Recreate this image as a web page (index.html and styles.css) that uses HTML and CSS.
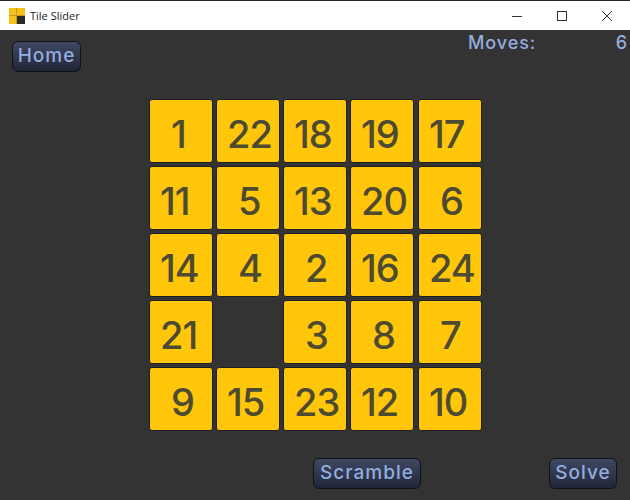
FILE: index.html
```html
<!DOCTYPE html>
<html lang="en">
<head>
    <title>Tile Slider</title>
    <link rel="stylesheet" href="styles.css">
</head>
<body>
    <div class="titlebar">
        <svg class="app-icon" width="16" height="16" viewBox="0 0 16 16">
            <rect x="0" y="0" width="16" height="16" fill="#f5c21b"/>
            <rect x="7" y="0" width="1" height="16" fill="#c99a1a"/>
            <rect x="0" y="7" width="16" height="1" fill="#c99a1a"/>
            <rect x="8" y="8" width="8" height="8" fill="#2b2b22"/>
        </svg>
        <span class="title">Tile Slider</span>
        <div class="window-buttons">
            <svg width="12" height="12" viewBox="0 0 12 12"><path d="M1 6.5H11" stroke="#333" fill="none"/></svg>
            <svg width="12" height="12" viewBox="0 0 12 12"><rect x="1.5" y="1.5" width="9" height="9" stroke="#333" fill="none"/></svg>
            <svg width="12" height="12" viewBox="0 0 12 12"><path d="M1 1L11 11M11 1L1 11" stroke="#333" fill="none"/></svg>
        </div>
    </div>

    <div class="game">
        <div class="top-row">
            <button class="btn">Home</button>
            <div class="moves">
                <span>Moves:</span>
                <span>6</span>
            </div>
        </div>

        <div class="board">
            <div class="tile single">1</div>
            <div class="tile">22</div>
            <div class="tile">18</div>
            <div class="tile">19</div>
            <div class="tile">17</div>
            <div class="tile">11</div>
            <div class="tile single">5</div>
            <div class="tile">13</div>
            <div class="tile">20</div>
            <div class="tile single">6</div>
            <div class="tile">14</div>
            <div class="tile single">4</div>
            <div class="tile single">2</div>
            <div class="tile">16</div>
            <div class="tile">24</div>
            <div class="tile">21</div>
            <div class="tile empty"></div>
            <div class="tile single">3</div>
            <div class="tile single">8</div>
            <div class="tile single">7</div>
            <div class="tile single">9</div>
            <div class="tile">15</div>
            <div class="tile">23</div>
            <div class="tile">12</div>
            <div class="tile">10</div>
        </div>

        <div class="bottom-row">
            <button class="btn scramble">Scramble</button>
            <button class="btn solve">Solve</button>
        </div>
    </div>
</body>
</html>
```

FILE: styles.css
```css
body {
    margin: 0;
    height: 500px;
    overflow: hidden;
    background-color: #333333;
    font-family: Inter, sans-serif;
}

.titlebar {
    height: 29px;
    display: flex;
    align-items: center;
    background: white;
    border-top: 1px solid #2a2a2a;
}
.app-icon {
    margin-left: 9px;
}
.title {
    margin-left: 5px;
    font-family: "Open Sans", sans-serif;
    font-size: 11px;
    color: #222;
}
.window-buttons {
    margin-left: auto;
    display: flex;
    gap: 33px;
    padding-right: 17px;
}

.game {
    display: flex;
    flex-direction: column;
    height: 470px;
}

.top-row {
    height: 69px;
    display: flex;
    justify-content: space-between;
    align-items: flex-start;
    padding-left: 12px;
}
.top-row .btn {
    margin-top: 11px;
    width: 69px;
}
.moves {
    width: 160px;
    display: flex;
    justify-content: space-between;
    padding-right: 2px;
    margin-top: 2px;
    font-size: 18px;
    font-weight: 500;
    letter-spacing: 0.9px;
    color: #93addf;
}

.btn {
    height: 31px;
    padding: 0 0 2px;
    border: 1px solid #111216;
    border-radius: 6px;
    background: linear-gradient(#3f4963, #212538);
    color: #93addf;
    font-family: Inter, sans-serif;
    font-size: 19px;
    font-weight: 500;
    letter-spacing: 1px;
}

.board {
    display: grid;
    grid-template-columns: repeat(3, 67px) 68px 64px;
    grid-auto-rows: 64px;
    row-gap: 3px;
    margin-left: 149px;
}
.tile {
    width: 64px;
    display: flex;
    align-items: center;
    padding-left: 10px;
    padding-top: 5px;
    box-sizing: border-box;
    background-color: #ffc60a;
    border: 1px solid #1f1f1f;
    border-radius: 3px;
    color: #4d4a32;
    font-size: 38px;
    font-weight: 500;
    letter-spacing: -1px;
}
.tile.single {
    padding-left: 21px;
}
.tile.empty {
    background: none;
    border: none;
}

.bottom-row {
    display: flex;
    margin-top: 27px;
}
.scramble {
    width: 108px;
    margin-left: 313px;
}
.solve {
    width: 68px;
    margin-left: 128px;
}
```
